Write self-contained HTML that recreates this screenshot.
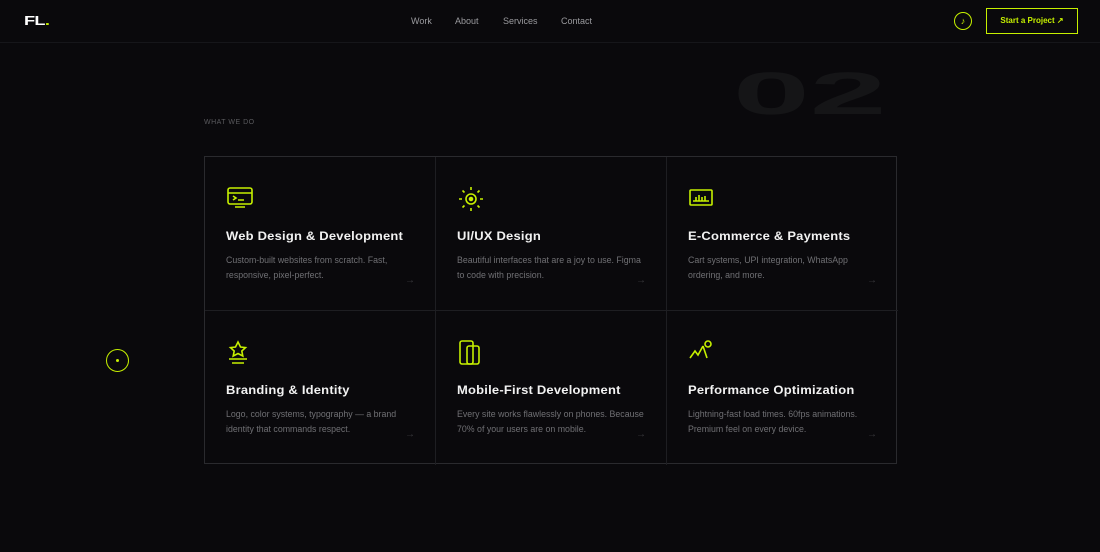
<!DOCTYPE html>
<html><head><meta charset="utf-8"><style>
*{margin:0;padding:0;box-sizing:border-box}
body{width:1100px;height:552px;background:#0a090c;font-family:"Liberation Sans",sans-serif;overflow:hidden;position:relative;color:#fff}
.nav{position:absolute;top:0;left:0;width:1100px;height:43px;border-bottom:1px solid #16161a}
.logo{position:absolute;left:24px;top:13px;font-weight:900;font-size:13px;letter-spacing:-0.5px;transform:scaleX(1.4);transform-origin:left}
.logo i{color:#c6f000;font-style:normal}
.links{position:absolute;top:16px;left:411px;font-size:9px;color:#9a9a9e}
.links span{position:absolute;white-space:nowrap}
.music{position:absolute;left:954px;top:12px;width:18px;height:18px;border:1.3px solid #c6f000;border-radius:50%;color:#c6f000;font-size:9px;text-align:center;line-height:16px}
.btn{position:absolute;left:986px;top:8px;width:92px;height:26px;border:1.5px solid #c6f000;color:#c6f000;font-size:8px;font-weight:bold;text-align:center;line-height:23px}
.big{position:absolute;left:733px;top:59px;font-size:60px;font-weight:900;color:#151517;letter-spacing:0;transform:scaleX(2.3);transform-origin:left}
.label{position:absolute;left:204px;top:119px;font-size:7px;color:#5a5a5e;letter-spacing:.5px}
.grid{position:absolute;left:204px;top:156px;width:693px;height:308px;border:1px solid #2a2a2e;display:grid;grid-template-columns:231px 231px 231px;grid-template-rows:154px 154px}
.c{border-right:1px solid #1e1e22;border-bottom:1px solid #1e1e22;position:relative}
.c:nth-child(3n){border-right:none}.c:nth-child(n+4){border-bottom:none}
.c svg{position:absolute;left:22px;top:29px}
.c h3{position:absolute;left:21px;top:72px;font-size:12px;font-weight:bold;color:#f2f2f2;letter-spacing:.2px;white-space:nowrap;transform:scaleX(1.08);transform-origin:left}
.c p{position:absolute;left:21px;top:96px;width:188px;font-size:8.8px;line-height:15px;color:#707074}
.c b{position:absolute;left:200px;top:118px;font-weight:normal;font-size:10px;color:#3a3a3e}
.dot{position:absolute;left:106px;top:349px;width:23px;height:23px;border:1.3px solid #c6f000;border-radius:50%}
.dot:after{content:"";position:absolute;left:8.5px;top:8.5px;width:3px;height:3px;background:#c6f000;border-radius:50%}
</style></head><body>
<div class="nav">
<div class="logo">FL<i>.</i></div>
<div class="links"><span style="left:0">Work</span><span style="left:44px">About</span><span style="left:92px">Services</span><span style="left:150px">Contact</span></div>
<div class="music">♪</div>
<div class="btn">Start a Project ↗</div>
</div>
<div class="big">02</div>
<div class="label">WHAT WE DO</div>
<div class="grid">
<div class="c"><svg width="26" height="24" fill="none" stroke="#c6f000" stroke-width="1.6"><rect x="1" y="2" width="24" height="16" rx="2"/><path d="M1 7h24M6 10l3 2-3 2M11 14h6M8 21h10"/></svg><h3>Web Design &amp; Development</h3><p>Custom-built websites from scratch. Fast, responsive, pixel-perfect.</p><b>→</b></div>
<div class="c"><svg width="26" height="26" fill="none" stroke="#c6f000" stroke-width="1.6"><circle cx="13" cy="13" r="5"/><circle cx="13" cy="13" r="1.5" fill="#c6f000"/><path d="M13 1v3M13 22v3M1 13h3M22 13h3M4.5 4.5l2 2M19.5 19.5l2 2M4.5 21.5l2-2M19.5 6.5l2-2"/></svg><h3>UI/UX Design</h3><p>Beautiful interfaces that are a joy to use. Figma to code with precision.</p><b>→</b></div>
<div class="c"><svg width="26" height="24" fill="none" stroke="#c6f000" stroke-width="1.6"><rect x="1" y="4" width="22" height="15" rx="1"/><path d="M7 15v-4M10 15v-6M13 15v-4M16 15v-5M4 15h16"/></svg><h3>E-Commerce &amp; Payments</h3><p>Cart systems, UPI integration, WhatsApp<br>ordering, and more.</p><b>→</b></div>
<div class="c"><svg width="26" height="26" fill="none" stroke="#c6f000" stroke-width="1.6"><path d="M11 2l2.5 5 5 .6-3.7 3.4 1 5L11 13.5 6.2 16l1-5L3.5 7.6l5-.6z"/><path d="M2 19h18M5 23h12"/></svg><h3>Branding &amp; Identity</h3><p>Logo, color systems, typography — a brand identity that commands respect.</p><b>→</b></div>
<div class="c"><svg width="26" height="26" fill="none" stroke="#c6f000" stroke-width="1.6"><rect x="2" y="1" width="13" height="23" rx="2"/><rect x="9" y="6" width="12" height="18" rx="2"/></svg><h3>Mobile-First Development</h3><p>Every site works flawlessly on phones. Because 70% of your users are on mobile.</p><b>→</b></div>
<div class="c"><svg width="26" height="24" fill="none" stroke="#c6f000" stroke-width="1.6"><path d="M1 18l5-7 3 4 5-9M14 6l4 12"/><circle cx="19" cy="4" r="3"/></svg><h3>Performance Optimization</h3><p>Lightning-fast load times. 60fps animations. Premium feel on every device.</p><b>→</b></div>
</div>
<div class="dot"></div>
</body></html>
